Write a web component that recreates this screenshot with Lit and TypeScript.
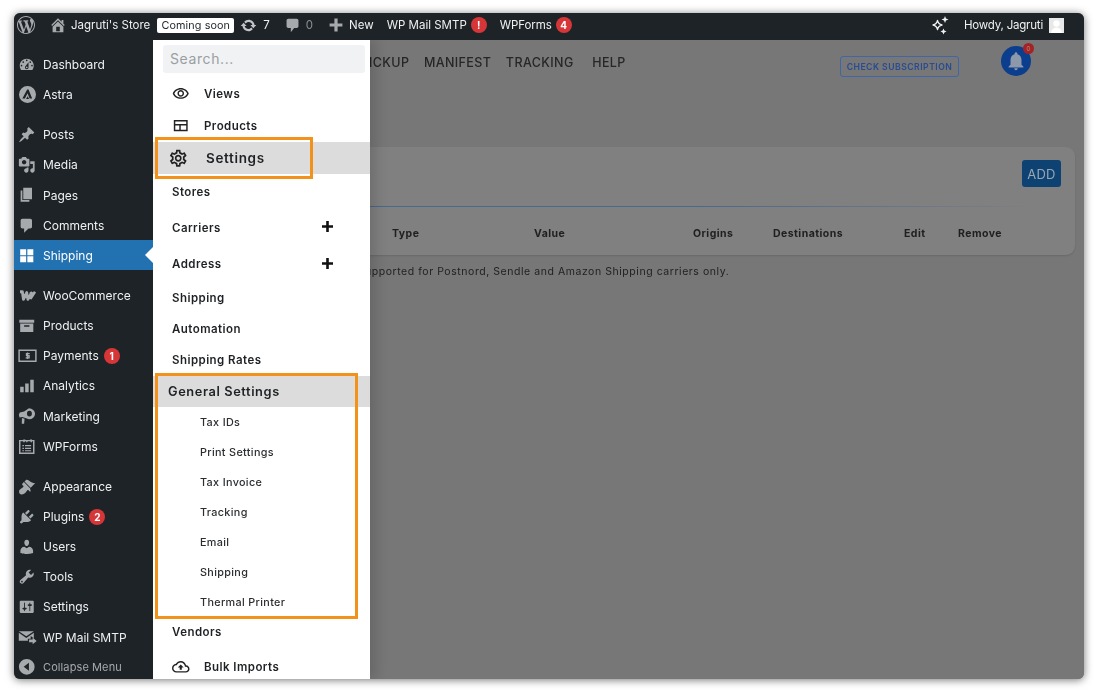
import { LitElement, html, css } from "lit";
import { customElement } from "lit/decorators.js";

const dash = (d: string) => html`<svg class="ic" viewBox="0 0 20 20"><path fill="currentColor" d=${d}></path></svg>`;
const mui = (d: string, cls = "mui") => html`<svg class=${cls} viewBox="0 0 24 24"><path fill="currentColor" d=${d}></path></svg>`;

const WP = "M20 10c0-5.51-4.49-10-10-10C4.48 0 0 4.49 0 10c0 5.52 4.48 10 10 10 5.51 0 10-4.48 10-10zM7.78 15.37L4.37 6.22c.55-.02 1.17-.08 1.17-.08.5-.06.44-1.13-.06-1.11 0 0-1.45.11-2.37.11-.18 0-.37 0-.58-.01C4.12 2.69 6.87 1.11 10 1.11c2.33 0 4.45.87 6.05 2.34-.68-.11-1.65.39-1.65 1.58 0 .74.45 1.36.9 2.1.35.61.55 1.36.55 2.46 0 1.49-1.4 5-1.4 5l-3.03-8.37c.54-.02.82-.17.82-.17.5-.05.44-1.25-.06-1.22 0 0-1.44.12-2.38.12-.87 0-2.33-.12-2.33-.12-.5-.03-.56 1.2-.06 1.22l.92.08 1.26 3.41zM17.41 10c.24-.64.74-1.87.43-4.25.7 1.29 1.05 2.71 1.05 4.25 0 3.29-1.73 6.24-4.4 7.78.97-2.59 1.94-5.2 2.92-7.78zM6.1 18.09C3.12 16.65 1.11 13.53 1.11 10c0-1.3.23-2.48.72-3.59C3.25 10.3 4.67 14.2 6.1 18.09zm4.03-6.63l2.58 6.98c-.86.29-1.76.45-2.71.45-.79 0-1.57-.11-2.29-.33.81-2.38 1.62-4.74 2.42-7.1z";
const I: Record<string, any> = {
  dashboard: dash("M3.76 16h12.48c1.1-1.37 1.76-3.11 1.76-5 0-4.42-3.58-8-8-8s-8 3.58-8 8c0 1.89.66 3.63 1.76 5zM10 4c.55 0 1 .45 1 1s-.45 1-1 1-1-.45-1-1 .45-1 1-1zM6 6c.55 0 1 .45 1 1s-.45 1-1 1-1-.45-1-1 .45-1 1-1zm8 0c.55 0 1 .45 1 1s-.45 1-1 1-1-.45-1-1 .45-1 1-1zm-5.37 5.55L12 7v6c0 1.1-.9 2-2 2s-2-.9-2-2c0-.57.24-1.08.63-1.45zM4 10c.55 0 1 .45 1 1s-.45 1-1 1-1-.45-1-1 .45-1 1-1zm12 0c.55 0 1 .45 1 1s-.45 1-1 1-1-.45-1-1 .45-1 1-1zm-5 3c0-.55-.45-1-1-1s-1 .45-1 1 .45 1 1 1 1-.45 1-1z"),
  astra: html`<svg class="ic big" viewBox="0 0 20 20"><path fill="currentColor" fill-rule="evenodd" d="M10 0a10 10 0 1 0 0 20 10 10 0 0 0 0-20zM9.600 4h1.600l4.300 10.600h-3L10 8.600l-3 6H4zM10.200 12l1.600 3.200H8.300z"></path></svg>`,
  pin: dash("M10.44 3.02l1.82-1.82 6.36 6.35-1.83 1.82c-1.05-.68-2.48-.57-3.41.36l-.75.75c-.92.93-1.04 2.35-.35 3.41l-1.83 1.82-2.41-2.41-2.8 2.79c-.42.42-3.38 2.71-3.8 2.29s1.86-3.39 2.28-3.81l2.79-2.79L4.1 9.36l1.83-1.82c1.05.69 2.48.57 3.4-.36l.75-.75c.93-.92 1.05-2.35.36-3.41z"),
  media: dash("M13 11V4c0-.55-.45-1-1-1h-1.67L9 1H5L3.67 3H2c-.55 0-1 .45-1 1v7c0 .55.45 1 1 1h10c.55 0 1-.45 1-1zM7 4.5c1.38 0 2.5 1.12 2.5 2.5S8.38 9.5 7 9.5 4.5 8.38 4.5 7 5.62 4.5 7 4.5zM14 6h5v10.5c0 1.38-1.12 2.5-2.5 2.5S14 17.88 14 16.5s1.12-2.5 2.5-2.5c.17 0 .34.02.5.05V9h-3V6zm-4 8.05V13h2v3.5c0 1.38-1.12 2.5-2.5 2.5S7 17.88 7 16.5 8.12 14 9.5 14c.17 0 .34.02.5.05z"),
  page: dash("M6 15V2h10v13H6zm-1 1h8v2H3V5h2v11z"),
  comment: dash("M5 2h9c1.1 0 2 .9 2 2v7c0 1.1-.9 2-2 2h-2l-5 5v-5H5c-1.1 0-2-.9-2-2V4c0-1.1.9-2 2-2z"),
  grid: dash("M2.500 2.500h6.800v6.800H2.500zM10.700 2.500h6.800v6.800h-6.800zM2.500 10.700h6.800v6.800H2.500zM10.700 10.700h6.800v6.800h-6.800z"),
  woo: html`<svg class="ic wide" viewBox="0 0 24 20"><path fill="none" stroke="currentColor" stroke-width="3.600" stroke-linejoin="round" d="M2.500 5h3l1.400 9.500L11 6l1.500 8.500L18 5.200"></path><path fill="none" stroke="currentColor" stroke-width="3.200" d="M16.500 5.500l-.8 8.500L21.500 5"></path></svg>`,
  archive: dash("M1.500 3h17v3.500h-17zM2.500 7.500h15V17h-15zM7 9.500v1.600h6V9.500z"),
  pay: html`<svg class="ic wide" viewBox="0 0 26 20"><path fill="none" stroke="currentColor" stroke-width="2" d="M1.500 2.500h23v15h-23z"></path><path fill="none" stroke="currentColor" stroke-width="1.800" d="M16 7h-4.400v2.800h3.600v3H10.500M13 5.400v9.200"></path></svg>`,
  bars: dash("M2.500 11h4v6.500h-4zM8.200 7.500h4v10h-4zM14 3h4v14.500h-4z"),
  mega: html`<svg class="ic" viewBox="0 0 20 20"><path fill="currentColor" fill-rule="evenodd" d="M12.500 1.500a6.500 5.800 0 0 1 0 12.500L5 11.500l-3.200.4-.8-3 1-2.500L7 5zM13 4.200a2.800 3.300 0 1 0 .1 6.600 2.800 3.300 0 0 0-.1-6.600zM4.500 12.500l3 1-.5 5.500H4.300z"></path></svg>`,
  wpf: html`<svg class="ic" viewBox="0 0 20 20"><path fill="none" stroke="currentColor" stroke-width="1.700" d="M2 3h16v14.500H2z"></path><path fill="currentColor" d="M6 1.800h2.500l-1 3H6zM13.500 1.800H16v3h-1.500zM8.800 3h2.600l-1.200 2.500zM5 8h1.800v1.500H5zM8 8h7v1.500H8zM5 11h1.800v1.500H5zM8 11h7v1.500H8zM5 14h1.800v1H5zM8 14h7v1H8z"></path></svg>`,
  brush: dash("M14.480 11.060L7.410 3.990l1.500-1.500c.5-.56 2.300-.47 3.510.32 1.210.8 1.430 1.280 2.910 2.100 1.180.64 2.450 1.260 4.450.85zm-.71.71L6.700 4.700 4.930 6.470c-.39.39-.39 1.020 0 1.410l1.060 1.060c.39.39.39 1.030 0 1.420-.6.6-1.430 1.110-2.210 1.690-.35.26-.7.53-1.010.84C1.430 13.230.9 15.210 1.500 17.050c.19.6.8 1.220 1.450 1.430 1.840.6 3.820.07 5.160-1.270.31-.31.58-.66.84-1.010.58-.78 1.090-1.610 1.690-2.210.39-.39 1.030-.39 1.420 0l1.060 1.060c.39.39 1.020.39 1.410 0z"),
  plug: dash("M13.110 4.360L9.870 7.600 8 5.730l3.240-3.240c.35-.34 1.050-.2 1.560.32.52.51.66 1.210.31 1.550zm-8 1.770l.91-1.120 9.010 9.010-1.190.84c-.71.71-2.630 1.160-3.820 1.160H6.140L4.900 17.260c-.59.59-1.540.59-2.120 0-.59-.58-.59-1.530 0-2.120l1.240-1.240v-3.880c0-1.130.4-3.190 1.090-3.890zm7.260 3.970l3.240-3.240c.34-.35 1.040-.21 1.550.31.52.51.66 1.210.31 1.550l-3.240 3.250z"),
  user: dash("M10 9.250c-2.270 0-2.730-3.440-2.730-3.440C7 4.020 7.820 2 9.970 2c2.160 0 2.980 2.020 2.710 3.810 0 0-.41 3.440-2.680 3.440zm0 2.570L12.720 10c2.390 0 4.520 2.330 4.520 4.530v2.490s-3.650 1.130-7.240 1.130c-3.650 0-7.240-1.130-7.240-1.130v-2.490c0-2.250 1.940-4.480 4.470-4.480z"),
  tools: dash("M16.680 9.770c-1.340 1.340-3.300 1.670-4.950.99l-5.410 6.520c-.99.99-2.590.99-3.580 0s-.99-2.590 0-3.570l6.520-5.420c-.68-1.650-.35-3.610.99-4.950 1.280-1.280 3.120-1.620 4.720-1.060l-2.890 2.890 2.820 2.820 2.860-2.870c.53 1.580.18 3.390-1.080 4.650zM3.810 16.210c.4.39 1.040.39 1.430 0 .4-.4.4-1.040 0-1.430-.39-.4-1.030-.4-1.430 0-.39.39-.39 1.030 0 1.430z"),
  sliders: dash("M18 16V4c0-.55-.45-1-1-1H3c-.55 0-1 .45-1 1v12c0 .55.45 1 1 1h14c.55 0 1-.45 1-1zM8 11h1c.55 0 1 .45 1 1s-.45 1-1 1H8v1.500c0 .28-.22.5-.5.5s-.5-.22-.5-.5V13H6c-.55 0-1-.45-1-1s.45-1 1-1h1V5.500c0-.28.22-.5.5-.5s.5.22.5.5V11zm5-2h-1c-.55 0-1-.45-1-1s.45-1 1-1h1V5.500c0-.28.22-.5.5-.5s.5.22.5.5V7h1c.55 0 1 .45 1 1s-.45 1-1 1h-1v5.500c0 .28-.22.5-.5.5s-.5-.22-.5-.5V9z"),
  mail: html`<svg class="ic wide" viewBox="0 0 24 20"><path fill="currentColor" d="M1 3l9.500 6.500L20 3zM1 5v10h11.500v-2.500H16V9l4 3V5l-9.500 6.500z"></path><path fill="currentColor" d="M14 13.500h4.500V11l5 4.300-5 4.300V17H14z"></path></svg>`,
  collapse: html`<svg class="ic" viewBox="0 0 20 20"><path fill="currentColor" fill-rule="evenodd" d="M10 1a9 9 0 1 0 0 18 9 9 0 0 0 0-18zM12.500 5.500v9L6.500 10z"></path></svg>`,
};

const EYE = "M12 6c3.790 0 7.170 2.130 8.820 5.500C19.170 14.870 15.790 17 12 17s-7.170-2.130-8.820-5.500C4.830 8.130 8.210 6 12 6m0-2C7 4 2.730 7.110 1 11.500 2.730 15.890 7 19 12 19s9.270-3.110 11-7.500C21.270 7.110 17 4 12 4zm0 5c1.380 0 2.500 1.120 2.500 2.500S13.380 14 12 14s-2.500-1.120-2.500-2.500S10.620 9 12 9m0-2c-2.480 0-4.500 2.020-4.500 4.500S9.520 16 12 16s4.500-2.020 4.500-4.500S14.480 7 12 7z";
const TABLE = "M2.500 4h19v15.500h-19zM4.500 6v3.500h15V6zM4.500 11.500v6h5.500v-6zM12 11.500v6h7.500v-6z";
const GEAR = "M19.430 12.980c.04-.32.07-.64.07-.98 0-.34-.03-.66-.07-.98l2.110-1.650c.19-.15.24-.42.12-.64l-2-3.460c-.09-.16-.26-.25-.44-.25-.06 0-.12.01-.17.03l-2.490 1c-.52-.4-1.080-.73-1.690-.98l-.38-2.650C14.460 2.180 14.250 2 14 2h-4c-.25 0-.46.18-.49.42l-.38 2.650c-.61.25-1.170.59-1.690.98l-2.490-1c-.06-.02-.12-.03-.18-.03-.17 0-.34.09-.43.25l-2 3.460c-.13.22-.07.49.12.64l2.110 1.650c-.04.32-.07.65-.07.98 0 .33.03.66.07.98l-2.110 1.650c-.19.15-.24.42-.12.64l2 3.460c.09.16.26.25.44.25.06 0 .12-.01.17-.03l2.490-1c.52.4 1.080.73 1.690.98l.38 2.650c.03.24.24.42.49.42h4c.25 0 .46-.18.49-.42l.38-2.650c.61-.25 1.170-.59 1.690-.98l2.490 1c.06.02.12.03.18.03.17 0 .34-.09.43-.25l2-3.460c.12-.22.07-.49-.12-.64l-2.110-1.650zm-1.980-1.710c.04.31.05.52.05.73 0 .21-.02.43-.05.73l-.14 1.130.89.7 1.080.84-.7 1.210-1.270-.51-1.040-.42-.9.68c-.43.32-.84.56-1.250.73l-1.060.43-.16 1.130-.2 1.350h-1.400l-.19-1.350-.16-1.130-1.060-.43c-.43-.18-.83-.41-1.230-.71l-.91-.7-1.060.43-1.270.51-.7-1.210 1.080-.84.89-.7-.14-1.130c-.03-.31-.05-.54-.05-.74s.02-.43.05-.73l.14-1.130-.89-.7-1.080-.84.7-1.210 1.270.51 1.040.42.9-.68c.43-.32.84-.56 1.250-.73l1.060-.43.16-1.130.2-1.350h1.390l.19 1.350.16 1.130 1.060.43c.43.18.83.41 1.230.71l.91.7 1.060-.43 1.270-.51.7 1.210-1.070.85-.89.7.14 1.130zM12 8c-2.210 0-4 1.790-4 4s1.790 4 4 4 4-1.790 4-4-1.790-4-4-4zm0 6c-1.100 0-2-.9-2-2s.9-2 2-2 2 .9 2 2-.9 2-2 2z";
const CLOUD = "M19.350 10.040C18.670 6.590 15.640 4 12 4 9.110 4 6.600 5.640 5.350 8.040 2.340 8.360 0 10.910 0 14c0 3.310 2.690 6 6 6h13c2.760 0 5-2.240 5-5 0-2.640-2.050-4.780-4.650-4.960zM19 18H6c-2.210 0-4-1.790-4-4 0-2.050 1.530-3.760 3.560-3.970l1.070-.11.5-.95C8.080 7.140 9.940 6 12 6c2.620 0 4.880 1.860 5.390 4.430l.3 1.500 1.530.11c1.560.1 2.780 1.410 2.780 2.960 0 1.650-1.350 3-3 3zM8 13h2.550v3h2.900v-3H16l-4-4z";
const BELL = "M12 22c1.100 0 2-.9 2-2h-4c0 1.100.9 2 2 2zm6-6v-5c0-3.070-1.630-5.640-4.500-6.320V4c0-.83-.67-1.500-1.500-1.500s-1.500.67-1.500 1.500v.68C7.640 5.360 6 7.920 6 11v5l-2 2v1h16v-1l-2-2z";

type Side = { icon: string; label: string; badge?: string; active?: boolean; dim?: boolean };
const groups: Side[][] = [
  [{ icon: "dashboard", label: "Dashboard" }, { icon: "astra", label: "Astra" }],
  [
    { icon: "pin", label: "Posts" }, { icon: "media", label: "Media" }, { icon: "page", label: "Pages" },
    { icon: "comment", label: "Comments" }, { icon: "grid", label: "Shipping", active: true },
  ],
  [
    { icon: "woo", label: "WooCommerce" }, { icon: "archive", label: "Products" },
    { icon: "pay", label: "Payments", badge: "1" }, { icon: "bars", label: "Analytics" },
    { icon: "mega", label: "Marketing" }, { icon: "wpf", label: "WPForms" },
  ],
  [
    { icon: "brush", label: "Appearance" }, { icon: "plug", label: "Plugins", badge: "2" },
    { icon: "user", label: "Users" }, { icon: "tools", label: "Tools" }, { icon: "sliders", label: "Settings" },
    { icon: "mail", label: "WP Mail SMTP" }, { icon: "collapse", label: "Collapse Menu", dim: true },
  ],
];

type Row = { label: string; h: number; kind: string; icon?: string; plus?: boolean };
const rows: Row[] = [
  { label: "Views", h: 32, kind: "icon", icon: EYE },
  { label: "Products", h: 32, kind: "icon", icon: TABLE },
  { label: "Settings", h: 32, kind: "band", icon: GEAR },
  { label: "Stores", h: 36, kind: "plain" },
  { label: "Carriers", h: 35, kind: "plain", plus: true },
  { label: "Address", h: 38, kind: "plain", plus: true },
  { label: "Shipping", h: 30, kind: "plain" },
  { label: "Automation", h: 31, kind: "plain" },
  { label: "Shipping Rates", h: 32, kind: "plain" },
  { label: "General Settings", h: 31, kind: "head" },
  { label: "Tax IDs", h: 30, kind: "sub" },
  { label: "Print Settings", h: 30, kind: "sub" },
  { label: "Tax Invoice", h: 30, kind: "sub" },
  { label: "Tracking", h: 30, kind: "sub" },
  { label: "Email", h: 30, kind: "sub" },
  { label: "Shipping", h: 30, kind: "sub" },
  { label: "Thermal Printer", h: 30, kind: "sub" },
  { label: "Vendors", h: 30, kind: "plain" },
  { label: "Bulk Imports", h: 40, kind: "icon", icon: CLOUD },
];

@customElement("app-root")
export class AppRoot extends LitElement {
  static styles = css`
    :host { display: block; position: relative; width: 1100px; height: 693px; background: #fff; overflow: hidden;
      font-family: Inter, "Liberation Sans", sans-serif; box-sizing: border-box; padding: 13px 16px 14px 14px; }
    * { box-sizing: border-box; }
    .win { height: 666px; display: flex; flex-direction: column; border-radius: 6px; overflow: hidden; background: #777;
      box-shadow: 0 1px 9px rgba(0,0,0,.55); filter: blur(.35px); }
    .bar { height: 26.5px; flex: none; background: #1d2327; color: #f0f0f1; display: flex; align-items: center; font-size: 11.500px; white-space: nowrap; padding-bottom: 2px; }
    .bar svg { display: block; flex: none; }
    .logo { width: 18px; height: 18px; color: #a7aaad; margin-left: 3px; }
    .home { width: 18px; height: 18px; color: #a7aaad; margin-left: 13.500px; margin-right: 4.500px; }
    .soon { background: #fff; color: #1d2327; height: 15px; line-height: 15px; width: 77px; text-align: center; border-radius: 2px; margin-left: 7px; font-size: 10.800px; letter-spacing: .1px; }
    .upd { width: 17px; height: 17px; color: #c3c4c7; margin-left: 6px; margin-right: 6px; }
    .cmt { width: 17px; height: 17px; color: #a7aaad; margin-left: 14px; margin-right: 5px; }
    .gray { color: #8c8f94; }
    .plus { width: 16px; height: 16px; color: #a7aaad; margin-left: 14.500px; margin-right: 5.500px; }
    .b { display: inline-flex; align-items: center; justify-content: center; width: 16px; height: 16px; border-radius: 50%; background: #d63638; color: #fff; font-size: 10px; font-weight: 700; flex: none; }
    .smtp { margin-left: 13px; }
    .smtpb { margin-left: 4px; }
    .wpf { margin-left: 13px; letter-spacing: -.1px; }
    .wpfb { margin-left: 4px; }
    .spark { width: 20px; height: 20px; color: #f0f0f1; margin-left: auto; margin-right: 14px; }
    .howdy { letter-spacing: -.2px; }
    .ava { width: 15px; height: 15px; margin-left: 6px; margin-right: 20px; }
    .body { flex: 1; min-height: 0; display: flex; }
    .side { width: 139px; flex: none; background: #1d2327; padding-top: 10px; display: flex; flex-direction: column; gap: 10px; }
    .group { display: flex; flex-direction: column; }
    .it { position: relative; height: 30.150px; display: flex; align-items: center; color: #f0f0f1; font-size: 12px; padding-left: 3px; }
    .it.on { background: #2271b1; color: #fff; }
    .it.on::after { content: ""; position: absolute; right: 0; top: 50%; margin-top: -8px; border: 8px solid transparent; border-left-width: 0; border-right-color: #fff; }
    .it.dim { color: #a7aaad; font-size: 11px; letter-spacing: .1px; }
    .slot { width: 20px; height: 20px; margin-right: 6px; color: #a7aaad; display: flex; align-items: center; justify-content: center; flex: none; }
    .on .slot { color: #fff; }
    .ic { width: 17.500px; height: 17.500px; display: block; flex: none; }
    .ic.big { width: 17px; height: 17px; }
    .ic.wide { width: 19px; }
    .it .b { margin-left: 5px; }
    .content { flex: 1; min-width: 0; position: relative; display: flex; flex-direction: column; overflow: hidden; background: #777; }
    .head { height: 45px; flex: none; display: flex; align-items: center; padding-left: 207.500px; padding-right: 53px; }
    .tabs { display: flex; gap: 14.500px; font-size: 12.500px; letter-spacing: .4px; font-weight: 500; color: #262626; }
    .help { margin-left: 4px; }
    .chk { margin-left: auto; width: 119px; height: 21px; margin-top: 9px; border: 1px solid #3f66a8; border-radius: 3px; font-size: 8.600px; letter-spacing: .5px; font-weight: 600; color: #274b94; display: flex; align-items: center; justify-content: center; }
    .bellw { position: relative; width: 30px; height: 30px; margin-left: 42px; margin-top: -2px; border-radius: 50%; background: #0b3f8e; color: #8d98aa; display: flex; align-items: center; justify-content: center; }
    .bellw svg { width: 22px; height: 22px; display: block; }
    .dot { position: absolute; right: -3px; top: -3px; width: 11px; height: 11px; border-radius: 50%; background: #a32226; color: #b98; font-size: 6px; line-height: 11px; text-align: center; }
    .card { margin: 62.500px 9px 0 10px; height: 108px; flex: none; border-radius: 9px; background: #808080; box-shadow: 0 1px 2px rgba(0,0,0,.12); display: flex; flex-direction: column; }
    .ctop { height: 58.500px; flex: none; display: flex; justify-content: flex-end; align-items: flex-start; padding: 13px 14px 0 0; }
    .add { width: 39px; height: 27px; background: #0e4273; color: #9aa7b3; border-radius: 3px; font-size: 13px; letter-spacing: .3px; display: flex; align-items: center; justify-content: center; }
    .line { height: 1.500px; flex: none; margin-right: 36px; background: linear-gradient(90deg, #47688f 0%, #47688f 60%, rgba(90,110,140,0) 100%); }
    .thead { flex: 1; display: grid; grid-template-columns: 229px 142px 159px 80px 131px 54px auto; align-items: center; font-size: 10.500px; font-weight: 700; letter-spacing: .45px; color: #202020; padding-top: 4px; }
    .note { margin: 10px 0 0 141px; font-size: 10.500px; letter-spacing: .55px; color: #1f1f1f; line-height: 14px; }
    .drawer { position: absolute; left: 0; top: 0; bottom: 0; width: 217px; background: #fff; box-shadow: 6px 0 12px rgba(0,0,0,.14); display: flex; flex-direction: column; overflow: hidden; color: #1f2225; }
    .search { height: 28px; flex: none; margin: 5.500px 5px 5px 10px; background: #f1f2f3; border-radius: 3px; color: #9a9ea3; font-size: 14px; letter-spacing: .6px; display: flex; align-items: center; padding: 0 0 2px 7px; }
    .r { flex: none; display: flex; align-items: center; padding-left: 19px; font-size: 11.500px; font-weight: 600; letter-spacing: .45px; }
    .r .mui { width: 17.500px; height: 17.500px; flex: none; margin-right: 14.500px; display: block; color: #222; }
    .r.band { background: #dcdcdc; font-size: 13.500px; letter-spacing: .65px; padding-left: 15px; }
    .r.band .mui { width: 20.500px; height: 20.500px; margin-right: 17.500px; }
    .r.head { background: #dcdcdc; font-size: 12.800px; letter-spacing: .6px; padding-left: 15px; }
    .r.sub { padding-left: 47px; font-size: 10.800px; font-weight: 500; letter-spacing: .35px; color: #2b2d30; }
    .px { width: 11px; height: 11px; margin-left: auto; margin-right: 37px; margin-top: -2px; display: block; color: #111; flex: none; }
    .mark { position: absolute; border: 3px solid #f2921a; pointer-events: none; }
    .m1 { left: 155px; top: 137px; width: 157.500px; height: 42px; }
    .m2 { left: 155px; top: 373px; width: 203px; height: 246px; }
  `;

  render() {
    return html`
      <div class="win">
        <div class="bar">
          <svg class="logo" viewBox="0 0 20 20"><path fill="currentColor" d=${WP}></path></svg>
          <svg class="home" viewBox="0 0 20 20"><path fill="currentColor" d="M16 8.500l1.530 1.530-1.060 1.060L10 4.620l-6.470 6.470-1.060-1.060L10 2.500l4 4v-2h2v4zm-6-2.460l6 5.990V18H4v-5.970zM12 17v-5H8v5h4z"></path></svg>
          <span>Jagruti's Store</span>
          <span class="soon">Coming soon</span>
          <svg class="upd" viewBox="0 0 20 20"><path fill="currentColor" d="M10.200 3.280c3.530 0 6.430 2.610 6.920 6h2.080l-3.500 4-3.500-4h2.320c-.45-1.970-2.210-3.440-4.320-3.440-1.450 0-2.730.71-3.540 1.780L4.950 5.660C6.230 4.200 8.110 3.280 10.200 3.280zm-.4 13.440c-3.520 0-6.430-2.610-6.920-6H.8l3.500-4c1.170 1.330 2.330 2.670 3.500 4H5.480c.45 1.970 2.210 3.440 4.320 3.440 1.450 0 2.730-.71 3.540-1.780l1.710 1.950c-1.280 1.460-3.150 2.390-5.250 2.390z"></path></svg>
          <span>7</span>
          <svg class="cmt" viewBox="0 0 20 20"><path fill="currentColor" d="M5 2h10c1.100 0 2 .9 2 2v7c0 1.100-.9 2-2 2h-3l-4 5v-5H5c-1.100 0-2-.9-2-2V4c0-1.100.9-2 2-2z"></path></svg>
          <span class="gray">0</span>
          <svg class="plus" viewBox="0 0 20 20"><path fill="currentColor" d="M8 2h4v6h6v4h-6v6H8v-6H2V8h6z"></path></svg>
          <span>New</span>
          <span class="smtp">WP Mail SMTP</span>
          <span class="b smtpb">!</span>
          <span class="wpf">WPForms</span>
          <span class="b wpfb">4</span>
          <svg class="spark" viewBox="0 0 20 20"><path fill="none" stroke="currentColor" stroke-width="1.300" stroke-linejoin="round" d="M7.500 5.500c.6 2.600 1.700 3.900 4.500 4.500-2.800.6-3.900 1.900-4.500 4.500C6.900 11.900 5.800 10.600 3 10c2.800-.6 3.900-1.900 4.500-4.500z"></path><path fill="currentColor" d="M15 1l1 2.500 2.500 1-2.500 1-1 2.500-1-2.500-2.500-1 2.500-1zM13.500 13.500l.9 2.100 2.100.9-2.100.9-.9 2.100-.9-2.100-2.100-.9 2.100-.9z"></path></svg>
          <span class="howdy">Howdy, Jagruti</span>
          <svg class="ava" viewBox="0 0 15 15"><rect width="15" height="15" fill="#e8e8e8"></rect><circle cx="7.500" cy="5.500" r="3.200" fill="#fff"></circle><path fill="#fff" d="M2 15c.4-3.600 2.700-5.500 5.500-5.500S12.600 11.400 13 15z"></path></svg>
        </div>
        <div class="body">
          <nav class="side">
            ${groups.map((g) => html`<div class="group">
              ${g.map((it) => html`<div class="it ${it.active ? "on" : ""} ${it.dim ? "dim" : ""}">
                <span class="slot">${I[it.icon]}</span><span>${it.label}</span>
                ${it.badge ? html`<span class="b">${it.badge}</span>` : ""}
              </div>`)}
            </div>`)}
          </nav>
          <div class="content">
            <div class="head">
              <div class="tabs"><span>PICKUP</span><span>MANIFEST</span><span>TRACKING</span><span class="help">HELP</span></div>
              <div class="chk">CHECK SUBSCRIPTION</div>
              <div class="bellw">${mui(BELL, "")}<span class="dot">0</span></div>
            </div>
            <div class="card">
              <div class="ctop"><div class="add">ADD</div></div>
              <div class="line"></div>
              <div class="thead"><span></span><span>Type</span><span>Value</span><span>Origins</span><span>Destinations</span><span>Edit</span><span>Remove</span></div>
            </div>
            <div class="note">Tax IDs are supported for Postnord, Sendle and Amazon Shipping carriers only.</div>
            <aside class="drawer">
              <div class="search">Search...</div>
              ${rows.map((r) => html`<div class="r ${r.kind}" style="height:${r.h}px">
                ${r.icon ? mui(r.icon) : ""}<span>${r.label}</span>
                ${r.plus ? html`<svg class="px" viewBox="0 0 11 11"><path fill="currentColor" d="M4.200 0h2.600v4.200H11v2.600H6.800V11H4.200V6.800H0V4.200h4.200z"></path></svg>` : ""}
              </div>`)}
            </aside>
          </div>
        </div>
      </div>
      <div class="mark m1"></div>
      <div class="mark m2"></div>
    `;
  }
}
